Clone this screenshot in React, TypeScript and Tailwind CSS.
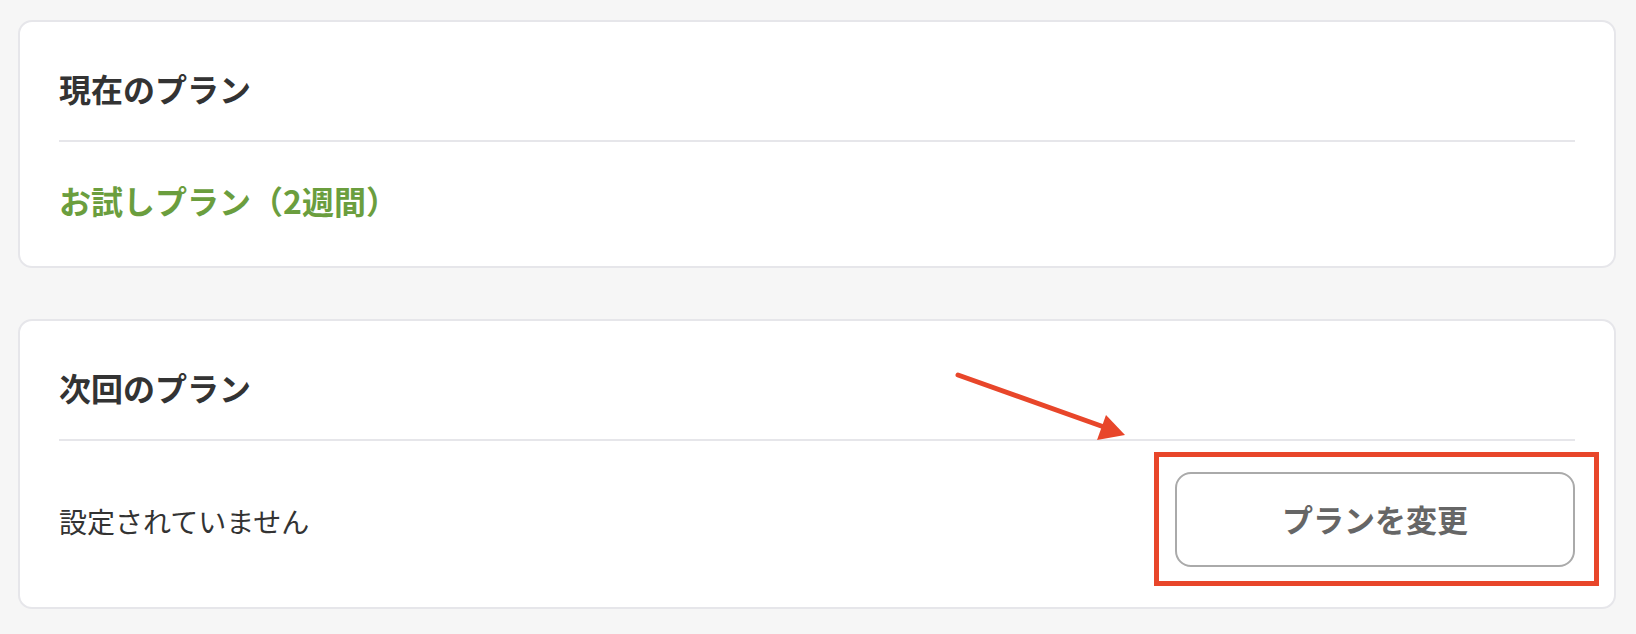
import React from 'react';

const font = { fontFamily: '"Noto Sans CJK JP", "Noto Sans", sans-serif' };

const PlanCard: React.FC<{ title: string; children: React.ReactNode; bodyClass: string }> = ({
  title,
  children,
  bodyClass,
}) => {
  return (
    <section className="bg-white border-2 border-[#e6e6ea] rounded-[14px] px-[39px] pt-[42px]">
      <h2 className="text-[32px] leading-[48px] font-bold text-[#333333]">{title}</h2>
      <div className="mt-[28px] h-[2px] bg-[#e6e6ea]" />
      <div className={bodyClass}>{children}</div>
    </section>
  );
};

const App: React.FC = () => {
  return (
    <div className="relative min-h-screen bg-[#f6f6f6] pl-[18px] pr-[20px] pt-[20px] pb-[25px]" style={font}>
      <div className="flex flex-col gap-[51px]">
        <PlanCard title="現在のプラン" bodyClass="pt-[34px] pb-[42px]">
          <p className="text-[32px] leading-[48px] font-bold text-[#6b9e3e]">お試しプラン（2週間）</p>
        </PlanCard>

        <PlanCard title="次回のプラン" bodyClass="pt-[31px] pb-[40px] flex items-center justify-between">
          <p className="text-[28px] leading-[40px] text-[#333333] pt-[3px]">設定されていません</p>
          <div className="relative">
            <button className="w-[400px] h-[95px] rounded-[16px] border-2 border-[#aaaaaa] bg-white text-[31px] font-bold text-[#666666]">
              プランを変更
            </button>
            <div className="absolute -left-[21px] -top-[20px] -right-[24px] -bottom-[19px] border-[5px] border-[#e8462a] pointer-events-none" />
          </div>
        </PlanCard>
      </div>

      <svg className="absolute inset-0 w-full h-full pointer-events-none" viewBox="0 0 1636 634">
        <line x1="958" y1="375" x2="1104" y2="427" stroke="#e8462a" strokeWidth="5" strokeLinecap="round" />
        <polygon points="1125,435 1106,415 1097,440" fill="#e8462a" />
      </svg>
    </div>
  );
};

export default App;
